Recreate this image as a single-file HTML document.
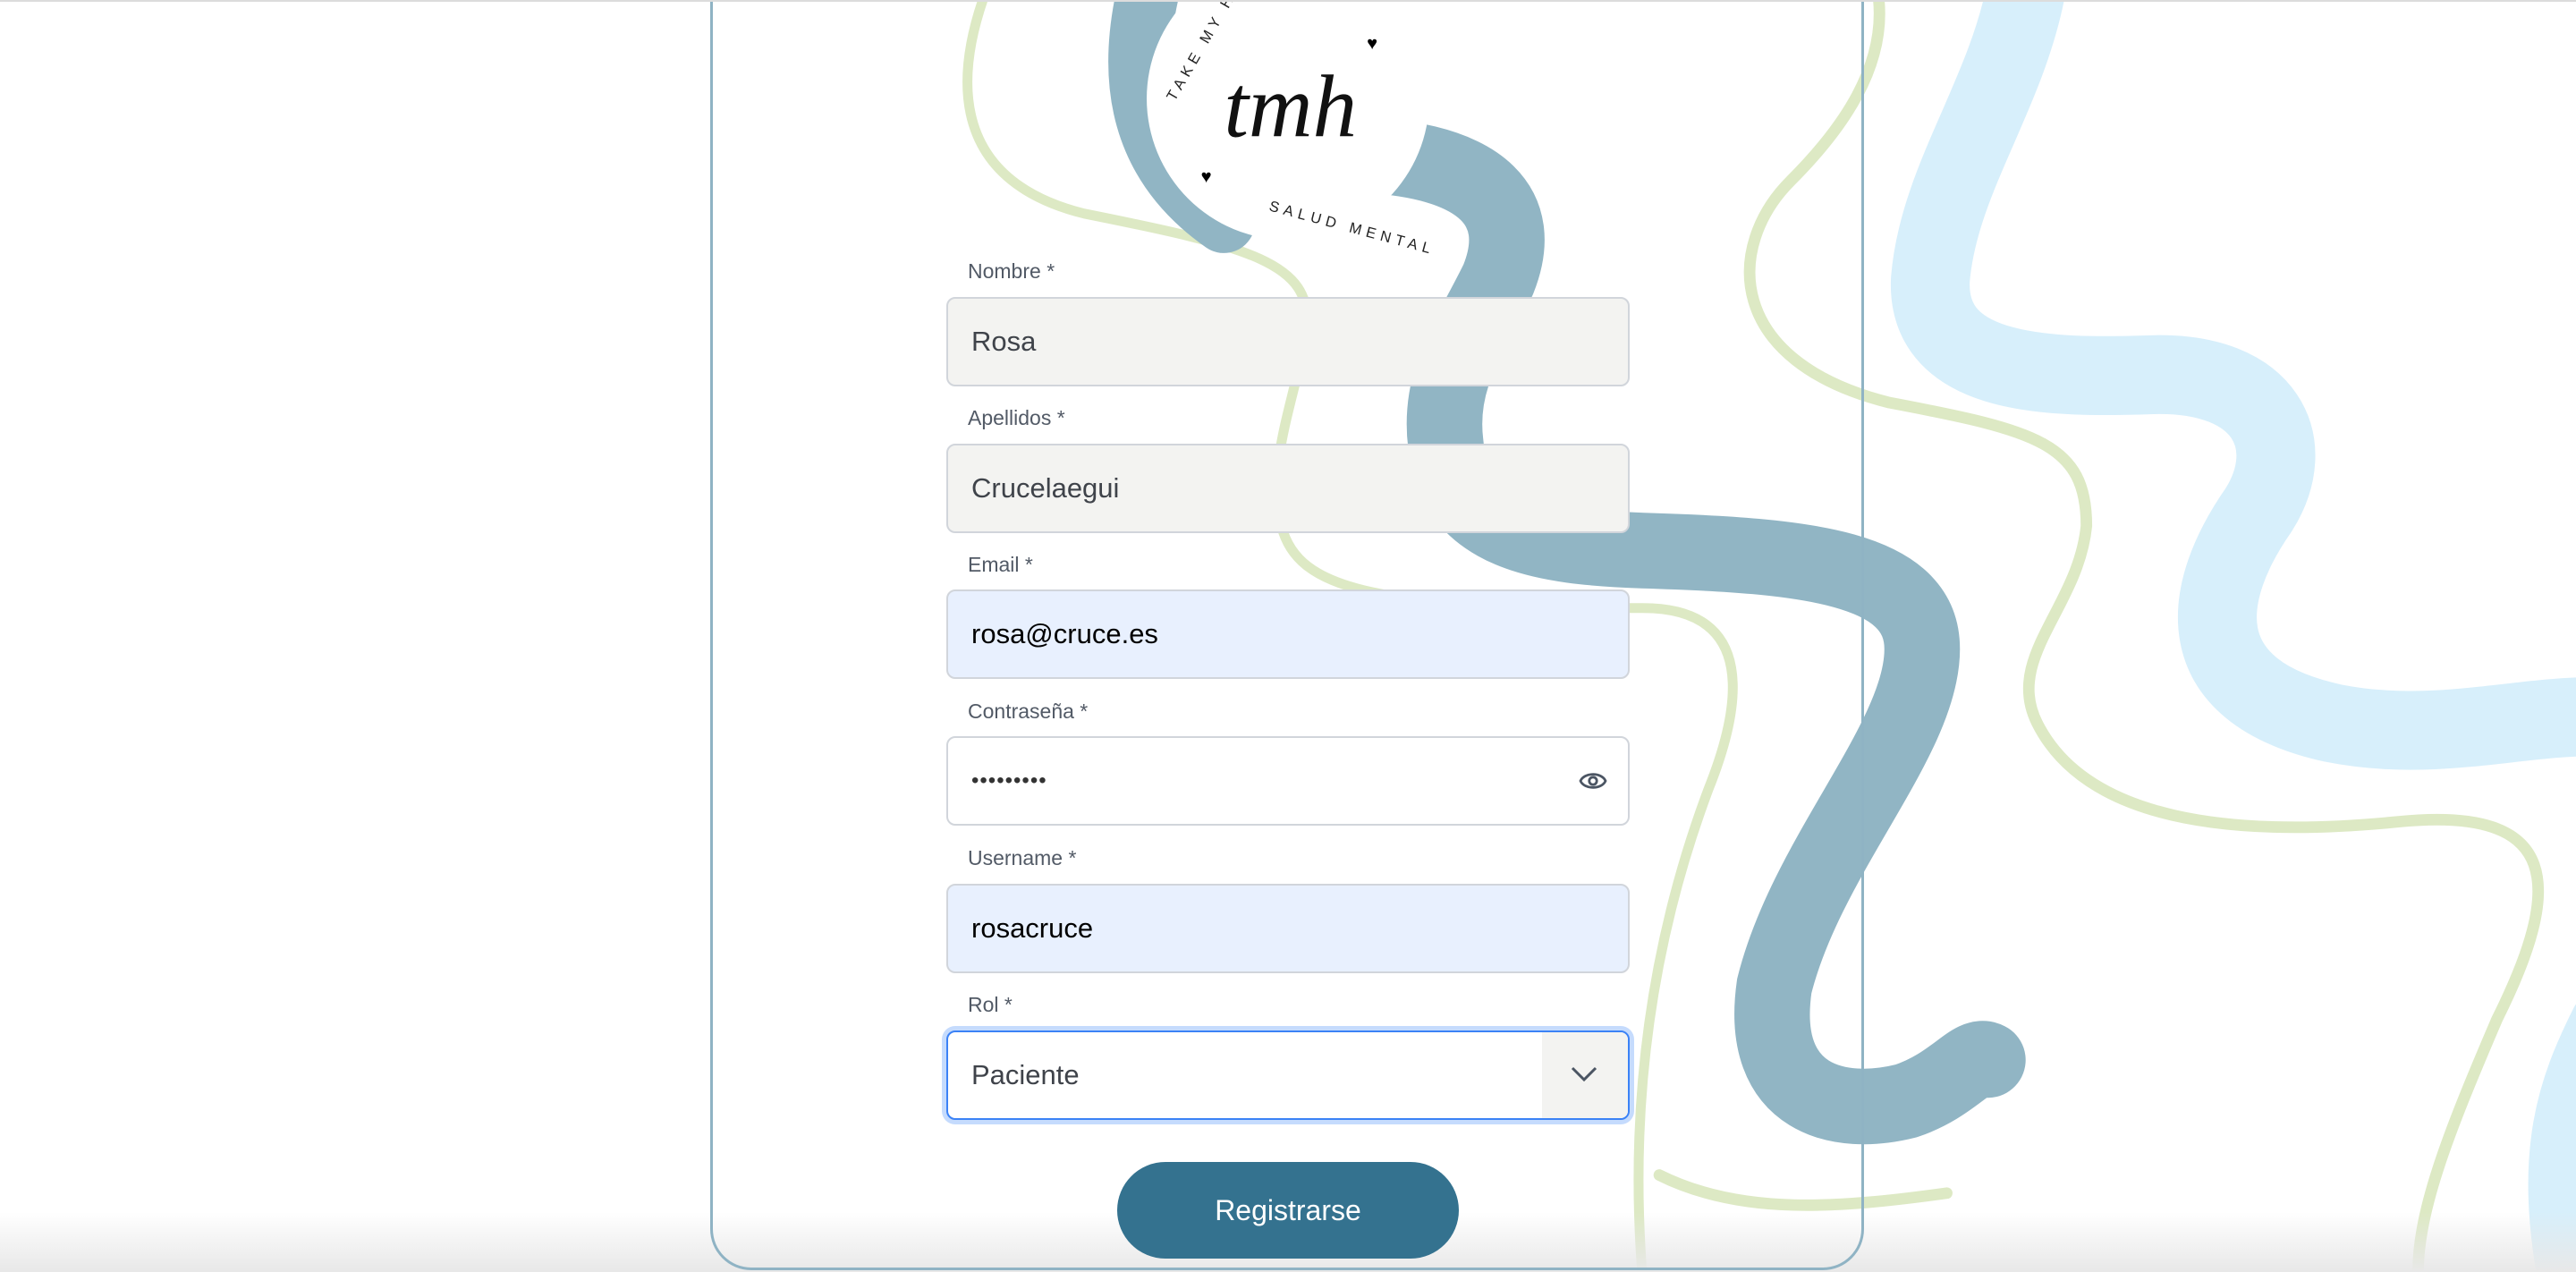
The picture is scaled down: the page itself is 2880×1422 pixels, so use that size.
<!DOCTYPE html>
<html><head><meta charset="utf-8"><style>
html,body{margin:0;padding:0;width:2880px;height:1422px;overflow:hidden;background:#fff;font-family:"Liberation Sans",sans-serif}
.topline{position:absolute;left:0;top:0;width:2880px;height:2px;background:#dcdcdc;z-index:5}
svg.bg{position:absolute;left:0;top:0;width:2880px;height:1422px}
.shade{position:absolute;left:0;top:1355px;width:2880px;height:67px;background:linear-gradient(#fff0,#e8e8e8)}
.card{position:absolute;left:794px;top:-40px;width:1290px;height:1460px;border:3px solid #8fb3c4;border-radius:0 0 46px 46px;border-top:none;box-sizing:border-box}
.lbl{position:absolute;left:1082px;font-size:23px;color:#525a66}
.inp{position:absolute;left:1058px;width:764px;height:100px;box-sizing:border-box;border:2px solid #d1d5db;border-radius:10px;font-size:31px;line-height:96px;padding-left:26px;color:#3f434a}
.btn{position:absolute;left:1249px;top:1299px;width:382px;height:108px;border-radius:54px;background:#34728f;color:#fff;font-size:32px;text-align:center;line-height:108px}
</style></head><body>
<svg class="bg" viewBox="0 0 1568 774" preserveAspectRatio="none">
<g fill="none" stroke-linecap="round">
<path d="M1233 -5 C1220 60 1180 110 1175 170 C1172 230 1250 230 1310 228 C1380 226 1400 270 1375 310 C1340 360 1330 420 1420 440 C1480 452 1530 436 1580 436" stroke="#d7effb" stroke-width="48"/>
<path d="M1580 620 C1560 660 1545 700 1560 780" stroke="#d7effb" stroke-width="30"/>
<path d="M600 -5 C580 50 580 110 660 130 C760 150 800 160 795 200 C790 240 770 280 780 320 C790 360 840 370 1000 370 C1070 370 1060 430 1040 480 C1010 560 990 660 1000 780" stroke="#dde9c4" stroke-width="6"/>
<path d="M1143 -5 C1150 40 1120 80 1090 110 C1050 150 1050 220 1150 245 C1240 262 1270 270 1270 320 C1265 370 1220 400 1240 440 C1270 500 1360 510 1460 500 C1560 490 1560 540 1520 620 C1490 690 1470 740 1472 780" stroke="#dde9c4" stroke-width="7"/>
<path d="M1010 715 C1060 740 1120 735 1185 726" stroke="#dde9c4" stroke-width="7"/>
<path d="M700 -10 C685 50 695 100 745 135" stroke="#91b5c4" stroke-width="38"/>
<path d="M840 95 C900 100 930 125 912 170 C895 205 875 230 880 270 C885 325 940 333 1000 335 C1100 338 1170 345 1170 395 C1170 450 1100 520 1080 600 C1070 670 1120 680 1160 670 C1190 660 1200 640 1210 645" stroke="#91b5c4" stroke-width="46"/>
</g>
<circle cx="784" cy="60" r="86" fill="#fff"/>
<text x="745" y="83" font-family="Liberation Serif,serif" font-style="italic" font-size="54" fill="#111">tmh</text>
<text x="772" y="128" font-size="9" letter-spacing="3" fill="#222" transform="rotate(15 772 128)">SALUD MENTAL</text>
<text x="715" y="62" font-size="9" letter-spacing="3" fill="#222" transform="rotate(-60 715 62)">TAKE MY H</text>
<text x="832" y="30" font-size="11" fill="#000">♥</text>
<text x="731" y="111" font-size="11" fill="#000">♥</text>
</svg>
<div class="shade"></div>
<div class="card"></div>
<div class="topline"></div>
<div class="lbl" style="top:290px">Nombre *</div>
<div class="inp" style="top:332px;background:#f3f3f1">Rosa</div>
<div class="lbl" style="top:454px">Apellidos *</div>
<div class="inp" style="top:496px;background:#f3f3f1">Crucelaegui</div>
<div class="lbl" style="top:618px">Email *</div>
<div class="inp" style="top:659px;background:#e8f0fe;color:#000">rosa@cruce.es</div>
<div class="lbl" style="top:782px">Contraseña *</div>
<div class="inp" style="top:823px;background:#fff;color:#333;font-size:24px;letter-spacing:1px">•••••••••
<svg style="position:absolute;right:22px;top:34px" width="34" height="28" viewBox="0 0 24 20"><path d="M2 10 C5 3 19 3 22 10 C19 17 5 17 2 10Z" fill="none" stroke="#4b5563" stroke-width="2"/><circle cx="12" cy="10" r="3" fill="none" stroke="#4b5563" stroke-width="2"/></svg></div>
<div class="lbl" style="top:946px">Username *</div>
<div class="inp" style="top:988px;background:#e8f0fe;color:#000">rosacruce</div>
<div class="lbl" style="top:1110px">Rol *</div>
<div class="inp" style="top:1152px;background:#fff;border-color:#3b82f6;box-shadow:0 0 0 5px #c5dbfd">Paciente
<div style="position:absolute;right:0;top:0;width:96px;height:96px;background:#f3f3f1;border-radius:0 8px 8px 0"><svg style="position:absolute;left:32px;top:38px" width="30" height="18" viewBox="0 0 30 18"><path d="M2 2 L15 15 L28 2" fill="none" stroke="#4b5563" stroke-width="3"/></svg></div></div>
<div class="btn">Registrarse</div>
</body></html>
